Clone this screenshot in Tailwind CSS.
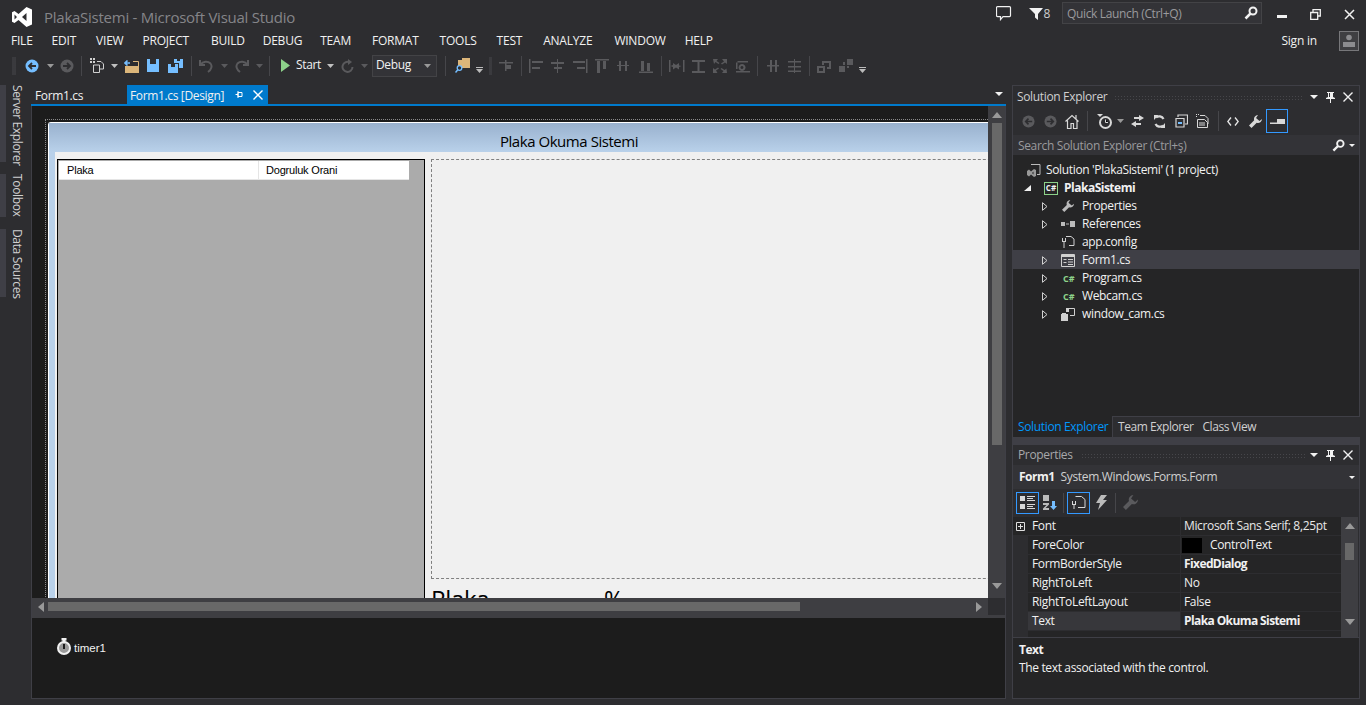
<!DOCTYPE html>
<html lang="en">
<head>
  <meta charset="UTF-8">
  <title>PlakaSistemi - Microsoft Visual Studio</title>
  <script src="https://cdn.jsdelivr.net/npm/@tailwindcss/browser@4"></script>
</head>
<body class="bg-[#2d2d30] text-[#f1f1f1] font-['Open_Sans',sans-serif] text-[12px] tracking-[-0.35px] leading-none overflow-hidden">
<div class="w-[1366px] h-[705px] flex flex-col overflow-hidden">

  <!-- title bar -->
  <div class="h-[32px] flex items-start shrink-0">
    <svg class="ml-[12px] mt-[7px]" width="20" height="20" viewBox="0 0 20 20"><path fill="#fff" fill-rule="evenodd" d="M14.500 0 20 2.500v15L14.500 20 6.500 13 2.500 16 0 14.700V5.300L2.500 4l4 3zM14.500 6 10 10l4.500 4zM2.500 7.500v5L5 10z"/></svg>
    <div class="ml-[12px] mt-[10px] text-[15px] text-[#858589] tracking-[-0.25px]">PlakaSistemi - Microsoft Visual Studio</div>
    <div class="ml-auto flex items-start">
      <svg class="mt-[6px]" width="16" height="15" viewBox="0 0 16 15"><path fill="none" stroke="#f1f1f1" stroke-width="1.200" d="M1.500.6h12a1 1 0 0 1 1 1v8a1 1 0 0 1-1 1H7l-2.500 3v-3h-3a1 1 0 0 1-1-1v-8a1 1 0 0 1 1-1z"/></svg>
      <svg class="ml-[17px] mt-[8px]" width="14" height="12" viewBox="0 0 14 12"><path fill="#f1f1f1" d="M0 0h14L9 6v6L6 9.500V6z"/></svg>
      <div class="mt-[8px] text-[#d0d0d0] text-[12px]">8</div>
      <div class="ml-[12px] mt-[2px] w-[200px] h-[22px] bg-[#333337] border border-[#434346] flex items-center pl-[4px] pr-[3px] pt-[2px] text-[#9a9a9d]">
        <span>Quick Launch (Ctrl+Q)</span>
        <svg class="ml-auto -mt-[2px]" width="14" height="14" viewBox="0 0 14 14"><circle cx="9" cy="5" r="3.500" fill="none" stroke="#f1f1f1" stroke-width="2"/><path stroke="#f1f1f1" stroke-width="2.500" d="M6.500 7.500 1.500 12.500"/></svg>
      </div>
      <div class="ml-[15px] mt-[15px] w-[10px] h-[3px] bg-[#f1f1f1]"></div>
      <svg class="ml-[23px] mt-[9px]" width="11" height="11" viewBox="0 0 11 11"><path fill="none" stroke="#f1f1f1" stroke-width="1.300" d="M3 3V.7h7.300V7H8M.7 3.500h7v6.800h-7z"/></svg>
      <svg class="ml-[23px] mt-[9px] mr-[11px]" width="11" height="11" viewBox="0 0 11 11"><path stroke="#f1f1f1" stroke-width="1.500" d="m1 1 9 9M10 1l-9 9"/></svg>
    </div>
  </div>

  <!-- menu bar -->
  <div class="h-[18px] flex items-center shrink-0 pl-[11px] relative">
    <div class="flex text-[12px] tracking-[-0.22px]">
      <span>FILE</span><span class="ml-[19px]">EDIT</span><span class="ml-[20px]">VIEW</span><span class="ml-[19px]">PROJECT</span><span class="ml-[22px]">BUILD</span><span class="ml-[18px]">DEBUG</span><span class="ml-[18px]">TEAM</span><span class="ml-[21px]">FORMAT</span><span class="ml-[21px]">TOOLS</span><span class="ml-[20px]">TEST</span><span class="ml-[21px]">ANALYZE</span><span class="ml-[22px]">WINDOW</span><span class="ml-[19px]">HELP</span>
    </div>
    <div class="ml-auto flex items-center">
      <span class="text-[12px] tracking-[-0.2px]">Sign in</span>
      <div class="ml-[22px] mr-[7px] w-[20px] h-[20px] border border-[#77777a] bg-[#3f3f42] flex items-center justify-center -mt-[1px]">
        <svg width="14" height="14" viewBox="0 0 14 14"><circle cx="7" cy="3.500" r="2.800" fill="#8c8c8f"/><path fill="#8c8c8f" d="M1 13V8h12v5z"/></svg>
      </div>
    </div>
  </div>

  <!-- toolbar -->
  <div class="h-[27px] mt-[2px] flex items-center shrink-0 pl-[12px] text-[#f1f1f1]">
    <div class="w-[4px] h-[18px] bg-[radial-gradient(#4a4a4e_0.6px,transparent_0.8px)] bg-[length:2px_2px]"></div>
    <svg class="ml-[9px]" width="14" height="14" viewBox="0 0 14 14"><circle cx="7" cy="7" r="6.500" fill="#75beff"/><path fill="none" stroke="#2d2d30" stroke-width="1.800" d="M11 7H4M7 4 4 7l3 3"/></svg>
    <svg class="ml-[8px]" width="7" height="4" viewBox="0 0 7 4"><path fill="#999" d="M0 0h7L3.500 4z"/></svg>
    <svg class="ml-[6px]" width="14" height="14" viewBox="0 0 14 14"><circle cx="7" cy="7" r="6.500" fill="#5a5a5d"/><path fill="none" stroke="#2d2d30" stroke-width="1.800" d="M3 7h7M7 4l3 3-3 3"/></svg>
    <div class="ml-[7px] w-[1px] h-[20px] bg-[#46464a]"></div>
    <svg class="ml-[8px]" width="14" height="15" viewBox="0 0 14 15"><path fill="#d0d0d0" d="M0 0h2v2H0zM3 0h2v2H3zM0 3h2v2H0zM3 3h2v2H3z"/><path fill="none" stroke="#d0d0d0" d="M7 3.500h4l2.500 2.500v5H10M3.500 7h6v7.500h-6z"/></svg>
    <svg class="ml-[7px]" width="7" height="4" viewBox="0 0 7 4"><path fill="#c0c0c0" d="M0 0h7L3.500 4z"/></svg>
    <svg class="ml-[6px]" width="15" height="15" viewBox="0 0 15 15"><path fill="#dcb67a" d="M1 8h14v7H1z"/><path fill="none" stroke="#dcb67a" d="M9 3.500h5.500V8"/><path fill="none" stroke="#75beff" stroke-width="1.600" d="M6 5H1.500M3.500 2.500 1 5l2.500 2.500"/></svg>
    <svg class="ml-[8px]" width="12" height="13" viewBox="0 0 12 13"><path fill="#75beff" fill-rule="evenodd" d="M0 0h12v13H0zM3 0v5h6V0z"/></svg>
    <svg class="ml-[9px]" width="15" height="14" viewBox="0 0 15 14"><path fill="#75beff" fill-rule="evenodd" d="M0 5h10v9H0zM3 5v3h4V5z"/><path fill="#75beff" fill-rule="evenodd" d="M6 0h9v9h-4V4H6zM9 0v2h3V0z"/></svg>
    <div class="ml-[8px] w-[1px] h-[20px] bg-[#46464a]"></div>
    <svg class="ml-[7px]" width="14" height="14" viewBox="0 0 14 14"><path fill="none" stroke="#5a5a5d" stroke-width="2" d="M1 1v5h5M1.500 5.500C4 2 9 2 11.500 4.500c2 2.500 1 6-2.500 8.500"/></svg>
    <svg class="ml-[8px]" width="7" height="4" viewBox="0 0 7 4"><path fill="#5a5a5d" d="M0 0h7L3.500 4z"/></svg>
    <svg class="ml-[7px]" width="14" height="14" viewBox="0 0 14 14"><path fill="none" stroke="#5a5a5d" stroke-width="2" d="M13 1v5H8M12.500 5.500C10 2 5 2 2.500 4.500c-2 2.500-1 6 2.500 8.500"/></svg>
    <svg class="ml-[7px]" width="7" height="4" viewBox="0 0 7 4"><path fill="#5a5a5d" d="M0 0h7L3.500 4z"/></svg>
    <div class="ml-[6px] w-[1px] h-[20px] bg-[#46464a]"></div>
    <svg class="ml-[11px]" width="9" height="13" viewBox="0 0 9 13"><path fill="#8dd28a" d="M0 0 9 6.500 0 13z"/></svg>
    <span class="ml-[6px] mb-[2px]">Start</span>
    <svg class="ml-[6px]" width="7" height="4" viewBox="0 0 7 4"><path fill="#c0c0c0" d="M0 0h7L3.500 4z"/></svg>
    <svg class="ml-[7px]" width="13" height="14" viewBox="0 0 13 14"><path fill="none" stroke="#5a5a5d" stroke-width="2" d="M8.500 3.300A5 5 0 1 0 11.500 8"/><path fill="#5a5a5d" d="M7 0v6l4-3z"/></svg>
    <svg class="ml-[7px]" width="7" height="4" viewBox="0 0 7 4"><path fill="#5a5a5d" d="M0 0h7L3.500 4z"/></svg>
    <div class="ml-[4px] w-[65px] h-[22px] bg-[#333337] border border-[#434346] flex items-center pl-[3px]">
      <span class="mb-[2px]">Debug</span>
      <svg class="ml-auto mr-[5px]" width="7" height="4" viewBox="0 0 7 4"><path fill="#999" d="M0 0h7L3.500 4z"/></svg>
    </div>
    <div class="ml-[8px] w-[1px] h-[20px] bg-[#46464a]"></div>
    <svg class="ml-[9px]" width="15" height="15" viewBox="0 0 15 15"><path fill="#dcb67a" d="M3 2h4V0h8v10H3z"/><circle cx="4.500" cy="10" r="2.300" fill="#2d2d30" stroke="#75beff" stroke-width="1.300"/><path stroke="#75beff" stroke-width="1.500" d="M3 11.500 0.500 14.500"/></svg>
    <svg class="ml-[6px] mt-[9px]" width="7" height="6" viewBox="0 0 7 6"><path fill="#bbb" d="M0 0h7v1H0zM0 2h7L3.500 6z"/></svg>
    <div class="ml-[6px] w-[3px] h-[18px] bg-[radial-gradient(#4a4a4e_0.6px,transparent_0.8px)] bg-[length:2px_2px]"></div>
    <svg class="ml-[7px]" width="14" height="11" viewBox="0 0 14 11"><path fill="#5a5a5d" d="M0 2h14v1.500H0zM6 0h1.500v11H6zM7.500 5H12v4H7.500z"/></svg>
    <div class="ml-[8px] w-[1px] h-[20px] bg-[#46464a]"></div>
    <svg class="ml-[7px]" width="326" height="20" viewBox="0 -2 326 20" fill="#5a5a5d">
      <path d="M0 1h1.500v14H0zM3 3h11v2H3zM3 9h8v2H3z"/>
      <path d="M22 4h13v2H22zM25 9h8v2h-8zM28 1h1v14h-1z"/>
      <path d="M57 1h1.500v14H57zM44 3h12v2H44zM48 9h8v2h-8z"/>
      <path d="M66 1h14v1.500H66zM68 3h3v12h-3zM74 3h3v8h-3z"/>
      <path d="M90 3h2v10h-2zM96 3h2v10h-2zM88 7h12v1H88z"/>
      <path d="M110 15h14v-1.500h-14zM112 3h3v10h-3zM118 5h3v8h-3z"/>
      <path fill="#46464a" d="M132-2h1v20h-1zM228-2h1v20h-1zM280-2h1v20h-1z"/>
      <path d="M140 2h1.500v12H140zM154 2h1.500v12H154zM144 5l3 2 3-2v2.500L152.500 8 150 9v2.500l-3-2-3 2V9l-2.500-1L144 7z"/>
      <path d="M163 2h13v2h-13zM163 13h13v2h-13zM168.500 4h2v9h-2z"/>
      <path d="M184 1h5l-1.500 2 3 2-1 1-3-2L185 6zM198 1v5l-2-1.500-3 2-1-1 3-2L193 1zM184 15v-5l2 1.500 3-2 1 1-3 2 1.500 2.500zM198 15h-5l1.500-2-3-2 1-1 3 2 2-1.500z"/>
      <path fill-rule="evenodd" d="M207 3h12v1.500h-12zM207 3h1.500v8H207zM213 6a3.500 3.500 0 1 0 .1 0zM213 8a1.500 1.500 0 1 1-.1 0zM207 13h14v1.500h-14z"/>
      <path d="M241 2h2v12h-2zM246 2h2v12h-2zM238 7h12v1.500h-12z"/>
      <path d="M259 3h13v1.500h-13zM259 8h13v1.500h-13zM259 12.500h13V14h-13zM265 1h1v14h-1z"/>
      <path fill-rule="evenodd" d="M288 8h8v7h-8zM290 10v3h4v-3zM293 3h9v8h-4V9h2V5h-5v2h-2z"/>
      <path d="M310 8h6v6h-6zM318 1h6v6h-6zM314 4h2v3h-2zM318 8h2v2h-2z"/>
    </svg>
    <svg class="ml-[4px] mt-[9px]" width="7" height="6" viewBox="0 0 7 6"><path fill="#bbb" d="M0 0h7v1H0zM0 2h7L3.500 6z"/></svg>
  </div>

  <!-- main area -->
  <div class="h-[614px] mt-[6px] flex shrink-0">

    <!-- side tabs -->
    <div class="w-[31px] flex flex-col gap-[12px] text-[#d0d0d0] whitespace-nowrap">
      <div class="h-[77px] flex"><div class="w-[6px] bg-[#3f3f46]"></div><div class="ml-[5px] [writing-mode:vertical-rl]">Server Explorer</div></div>
      <div class="h-[43px] flex"><div class="w-[6px] bg-[#3f3f46]"></div><div class="ml-[5px] [writing-mode:vertical-rl]">Toolbox</div></div>
      <div class="h-[68px] flex"><div class="w-[6px] bg-[#3f3f46]"></div><div class="ml-[5px] [writing-mode:vertical-rl]">Data Sources</div></div>
    </div>

    <!-- document well -->
    <div class="w-[975px] flex flex-col shrink-0">
      <div class="h-[19px] flex items-stretch pl-[1px] shrink-0">
        <div class="w-[95px] pl-[3px] pt-[2px] flex items-center">Form1.cs</div>
        <div class="w-[141px] bg-[#007acc] pl-[3px] flex items-center">
          <span class="pt-[2px]">Form1.cs [Design]</span>
          <svg class="ml-[11px]" width="9" height="9" viewBox="0 0 9 9"><path fill="none" stroke="#fff" d="M.5 4.500H3M3 2.500h4v4H3zM3 1v7"/></svg>
          <svg class="ml-[9px]" width="10" height="10" viewBox="0 0 10 10"><path stroke="#fff" stroke-width="1.400" d="m.5.500 9 9M9.500.500l-9 9"/></svg>
        </div>
        <svg class="ml-auto mr-[3px] mt-[7px]" width="8" height="4" viewBox="0 0 8 4"><path fill="#f1f1f1" d="M0 0h8L4 4z"/></svg>
      </div>
      <div class="h-[2px] bg-[#007acc] shrink-0"></div>
      <div class="flex-1 border-l border-b border-r border-[#3f3f46] flex flex-col min-h-0">

        <!-- designer surface -->
        <div class="h-[492px] flex shrink-0 bg-[#1c1c1c]">
          <div class="w-[956px] pl-[13px] pt-[13px] overflow-hidden">
            <div class="h-[492px] pl-[2px] border-l border-t border-dotted border-[#8a8a8a] pt-[2px]">
              <div class="w-[1100px] h-[600px] border-t border-l border-white rounded-tl-[3px] bg-[#b9d1ea]">
                <div class="h-[29px] w-[1040px] bg-gradient-to-b from-[#99b1ce] to-[#b9d1ea] text-black text-[15px] flex items-center justify-center tracking-[-0.45px] pt-[7px]">Plaka Okuma Sistemi</div>
                <div class="ml-[6px] bg-[#f0f0f0] h-[570px] pl-[2px] pt-[7px] flex text-black font-['Liberation_Sans',sans-serif] tracking-normal">
                  <div class="w-[368px] h-[460px] bg-[#ababab] border border-black p-[1px] shrink-0">
                    <div class="w-[350px] h-[19px] bg-white border-b border-[#e5e5e5] flex items-center text-[11px] tracking-[-0.2px]">
                      <div class="w-[200px] pl-[8px] border-r border-[#e5e5e5] h-full flex items-center">Plaka</div>
                      <div class="pl-[7px]">Dogruluk Orani</div>
                    </div>
                  </div>
                  <div class="ml-[6px]">
                    <div class="w-[600px] h-[420px] border border-dashed border-[#808080]"></div>
                    <div class="flex text-[24px] mt-[8px]">
                      <span class="w-[173px] font-['Open_Sans',sans-serif] tracking-[-0.3px]">Plaka</span>
                      <span class="font-['Open_Sans',sans-serif]">%</span>
                    </div>
                  </div>
                </div>
              </div>
            </div>
          </div>
          <div class="w-[17px] bg-[#3e3e42] flex flex-col items-center shrink-0">
            <svg class="mt-[6px]" width="10" height="6" viewBox="0 0 10 6"><path fill="#999" d="M0 6h10L5 0z"/></svg>
            <div class="w-[10px] h-[322px] mt-[5px] bg-[#686868]"></div>
            <svg class="mt-[138px]" width="10" height="6" viewBox="0 0 10 6"><path fill="#999" d="M0 0h10L5 6z"/></svg>
          </div>
        </div>

        <!-- horizontal scrollbar -->
        <div class="h-[20px] bg-[#3e3e42] flex items-start shrink-0">
          <svg class="ml-[6px] mt-[4px]" width="6" height="10" viewBox="0 0 6 10"><path fill="#999" d="M6 0v10L0 5z"/></svg>
          <div class="w-[753px] h-[9px] ml-[4px] mt-[4px] bg-[#686868]"></div>
          <svg class="ml-[176px] mt-[4px]" width="6" height="10" viewBox="0 0 6 10"><path fill="#999" d="M0 0v10l6-5z"/></svg>
          <div class="ml-[6px] w-[17px] h-[17px] bg-[#2d2d30]"></div>
        </div>

        <!-- component tray -->
        <div class="flex-1 bg-[#1c1c1c] flex items-start pl-[25px] pt-[20px]">
          <svg width="14" height="17" viewBox="0 0 14 17"><path fill="#f1f1f1" d="M4.500 0h5v2.500h-1V4h-3V2.500h-1z"/><circle cx="7" cy="10" r="6" fill="#9a9a9a" stroke="#f1f1f1" stroke-width="2"/><path stroke="#1c1c1c" stroke-width="2" d="M7 6v5"/></svg>
          <span class="ml-[3px] mt-[5px] text-[#f1f1f1] font-['Liberation_Sans',sans-serif] text-[11.500px] tracking-normal">timer1</span>
        </div>
      </div>
    </div>

    <!-- tool windows -->
    <div class="ml-[6px] w-[348px] flex flex-col shrink-0">

      <!-- solution explorer -->
      <div class="h-[331px] border border-b-0 border-[#3f3f46] flex flex-col shrink-0">
        <div class="h-[20px] flex items-center pl-[4px] pt-[2px] text-[#d0d0d0] shrink-0">
          <span>Solution Explorer</span>
          <div class="ml-[7px] w-[190px] h-[5px] bg-[radial-gradient(#46464a_1px,transparent_1px)] bg-[length:3px_3px]"></div>
          <svg class="ml-auto" width="8" height="4" viewBox="0 0 8 4"><path fill="#f1f1f1" d="M0 0h8L4 4z"/></svg>
          <svg class="ml-[8px]" width="9" height="11" viewBox="0 0 9 11"><path fill="#f1f1f1" d="M1 0h7v1H7v4l2 1v1H5v4H4V7H0V6l2-1V1H1zM3 1v4h1V1z"/></svg>
          <svg class="ml-[8px] mr-[6px]" width="10" height="10" viewBox="0 0 10 10"><path stroke="#f1f1f1" stroke-width="1.400" d="m.5.500 9 9M9.500.500l-9 9"/></svg>
        </div>
        <div class="h-[28px] flex items-center pl-[9px] pt-[2px] shrink-0">
          <svg width="13" height="13" viewBox="0 0 14 14"><circle cx="7" cy="7" r="6.500" fill="#5a5a5d"/><path fill="none" stroke="#2d2d30" stroke-width="1.800" d="M11 7H4M7 4 4 7l3 3"/></svg>
          <svg class="ml-[9px]" width="13" height="13" viewBox="0 0 14 14"><circle cx="7" cy="7" r="6.500" fill="#5a5a5d"/><path fill="none" stroke="#2d2d30" stroke-width="1.800" d="M3 7h7M7 4l3 3-3 3"/></svg>
          <svg class="ml-[8px]" width="14" height="15" viewBox="0 0 14 15"><path fill="none" stroke="#d8d8d8" stroke-width="1.200" d="M.5 7.500 7 1.500l6.500 6M2.500 6.500v8h3.500v-5h2.500v5H12v-8M11 1v4"/></svg>
          <div class="ml-[8px] w-[1px] h-[20px] bg-[#46464a]"></div>
          <svg class="ml-[9px]" width="15" height="15" viewBox="0 0 15 15"><path fill="#d8d8d8" d="M0 0h6L3 3z"/><circle cx="8.500" cy="8.500" r="5.500" fill="none" stroke="#d8d8d8" stroke-width="2"/><path stroke="#d8d8d8" d="M8.500 5.500v3H11"/></svg>
          <svg class="ml-[5px]" width="7" height="4" viewBox="0 0 7 4"><path fill="#999" d="M0 0h7L3.500 4z"/></svg>
          <svg class="ml-[7px]" width="13" height="12" viewBox="0 0 13 12"><path fill="#d8d8d8" d="M8 0l5 3-5 3V4H3V2h5zM5 6v2h5v2H5v2L0 9z"/></svg>
          <svg class="ml-[9px]" width="13" height="13" viewBox="0 0 13 13"><path fill="none" stroke="#d8d8d8" stroke-width="2.200" d="M10.500 4A4.800 4.800 0 0 0 3 2.500M2.500 9A4.800 4.800 0 0 0 10 10.500"/><path fill="#d8d8d8" d="M1 0h4.500L1 5zM12 13H7.500L12 8z"/></svg>
          <svg class="ml-[9px]" width="13" height="14" viewBox="0 0 13 14"><path fill="none" stroke="#d8d8d8" stroke-width="1.200" d="M3 3V1h9.500v9H10M1 4.500h8V13H1z"/><path fill="#75beff" d="M3 8h4v2H3z"/></svg>
          <svg class="ml-[8px]" width="14" height="14" viewBox="0 0 14 14"><path fill="#d8d8d8" d="M0 0h1v1H0zM2 0h1v1H2zM0 2h1v1H0z"/><path fill="none" stroke="#d8d8d8" d="M4 1.500h5l3 3V10M1.500 5.500h7l3 3v5h-10z"/><path stroke="#d8d8d8" d="M3 9h6M3 11h6"/></svg>
          <div class="ml-[8px] w-[1px] h-[20px] bg-[#46464a]"></div>
          <svg class="ml-[8px]" width="12" height="9" viewBox="0 0 12 9"><path fill="none" stroke="#e8e8e8" stroke-width="1.300" d="M4 .5.800 4.500 4 8.500M8 .5l3.200 4L8 8.500"/></svg>
          <svg class="ml-[10px]" width="13" height="13" viewBox="0 0 13 13"><path fill="#d8d8d8" d="M9 0a4 4 0 0 0-3.800 5.300L0 10.500 2.500 13l5.200-5.200A4 4 0 0 0 13 4L10.500 6 7 3z"/></svg>
          <div class="ml-[4px] w-[22px] h-[24px] border border-[#3399ff] flex items-center justify-center">
            <svg width="15" height="5" viewBox="0 0 15 5"><path fill="#d8d8d8" d="M0 3.500h15V5H0zM7 0h8v3.500H7z"/></svg>
          </div>
        </div>
        <div class="mt-[1px] h-[20px] bg-[#333337] flex items-center pl-[5px] pt-[2px] text-[#9a9a9d] shrink-0">
          <span>Search Solution Explorer (Ctrl+ş)</span>
          <svg class="ml-auto -mt-[2px]" width="13" height="13" viewBox="0 0 14 14"><circle cx="9" cy="5" r="3.500" fill="none" stroke="#f1f1f1" stroke-width="2"/><path stroke="#f1f1f1" stroke-width="2.500" d="M6.500 7.500 1.500 12.500"/></svg>
          <svg class="ml-[4px] mr-[4px] -mt-[2px]" width="6" height="3" viewBox="0 0 6 3"><path fill="#f1f1f1" d="M0 0h6L3 3z"/></svg>
        </div>
        <div class="flex-1 bg-[#252526] pt-[5px] text-[#f1f1f1] flex flex-col min-h-0">
          <div class="h-[18px] flex items-center pl-[13px] pt-[2px]">
            <svg width="15" height="14" viewBox="0 0 15 14"><path fill="none" stroke="#bbb" d="M5 1.500h9v10h-3"/><path fill="#999" fill-rule="evenodd" d="M1 8 3 6.500l2 2 3-2.500 2 1v6l-2 1-3-2.500-2 2-2-1.500zM7.500 8.500 6 10l1.500 1.500z"/></svg>
            <span class="ml-[5px]">Solution 'PlakaSistemi' (1 project)</span>
          </div>
          <div class="h-[18px] flex items-center pl-[11px] pt-[2px]">
            <svg width="7" height="6" viewBox="0 0 7 6"><path fill="#f1f1f1" d="M7 0v6H0z"/></svg>
            <div class="ml-[13px] w-[14px] h-[13px] border border-[#8dd28a] text-[8px] font-bold flex items-center justify-center tracking-normal">C#</div>
            <span class="ml-[6px] font-bold tracking-[-0.5px]">PlakaSistemi</span>
          </div>
          <div class="h-[18px] flex items-center pl-[29px] pt-[2px]">
            <svg width="6" height="9" viewBox="0 0 6 9"><path fill="none" stroke="#d0d0d0" d="M.5.700v7.600L5 4.500z"/></svg>
            <svg class="ml-[14px]" width="12" height="12" viewBox="0 0 13 13"><path fill="#bbb" d="M9 0a4 4 0 0 0-3.800 5.300L0 10.500 2.500 13l5.200-5.200A4 4 0 0 0 13 4L10.500 6 7 3z"/></svg>
            <span class="ml-[8px]">Properties</span>
          </div>
          <div class="h-[18px] flex items-center pl-[29px] pt-[2px]">
            <svg width="6" height="9" viewBox="0 0 6 9"><path fill="none" stroke="#d0d0d0" d="M.5.700v7.600L5 4.500z"/></svg>
            <svg class="ml-[13px]" width="14" height="6" viewBox="0 0 14 6"><path fill="#bbb" d="M0 1h4v4H0zM5 2.500h3v1H5zM9 0h5v6H9z"/></svg>
            <span class="ml-[7px]">References</span>
          </div>
          <div class="h-[18px] flex items-center pl-[48px] pt-[2px]">
            <svg width="14" height="14" viewBox="0 0 14 14"><path fill="none" stroke="#d0d0d0" d="M5 1.500h5l3 2.500v6.500H8"/><path fill="#d0d0d0" d="M1 3h1v3h2V3h1v4H3.500v6h-1V7H1z"/></svg>
            <span class="ml-[7px]">app.config</span>
          </div>
          <div class="h-[19px] bg-[#3f3f46] flex items-center pl-[29px] pt-[1px]">
            <svg width="6" height="9" viewBox="0 0 6 9"><path fill="none" stroke="#d0d0d0" d="M.5.700v7.600L5 4.500z"/></svg>
            <svg class="ml-[13px]" width="14" height="13" viewBox="0 0 14 13"><path fill="none" stroke="#d0d0d0" d="M.5.500h13v12H.5z"/><path fill="#d0d0d0" d="M1 1h12v2H1zM2.500 5h3v1h-3zM2.500 8h3v1h-3zM7 5h5v1H7zM7 7.500h5v1H7zM7 10h5v1H7z"/></svg>
            <span class="ml-[7px]">Form1.cs</span>
          </div>
          <div class="h-[17px] flex items-center pl-[29px] pt-[1px]">
            <svg width="6" height="9" viewBox="0 0 6 9"><path fill="none" stroke="#d0d0d0" d="M.5.700v7.600L5 4.500z"/></svg>
            <span class="ml-[15px] w-[13px] text-[#8dd28a] text-[9px] font-bold tracking-normal">C#</span>
            <span class="ml-[6px]">Program.cs</span>
          </div>
          <div class="h-[18px] flex items-center pl-[29px] pt-[2px]">
            <svg width="6" height="9" viewBox="0 0 6 9"><path fill="none" stroke="#d0d0d0" d="M.5.700v7.600L5 4.500z"/></svg>
            <span class="ml-[15px] w-[13px] text-[#8dd28a] text-[9px] font-bold tracking-normal">C#</span>
            <span class="ml-[6px]">Webcam.cs</span>
          </div>
          <div class="h-[18px] flex items-center pl-[29px] pt-[2px]">
            <svg width="6" height="9" viewBox="0 0 6 9"><path fill="none" stroke="#d0d0d0" d="M.5.700v7.600L5 4.500z"/></svg>
            <svg class="ml-[13px]" width="14" height="14" viewBox="0 0 14 14"><path fill="none" stroke="#d0d0d0" d="M5 1.500h8.500v7H9"/><path fill="#d0d0d0" d="M5 1h3v4H5zM0 7h7v7H0zM1 6h4v1H1z"/></svg>
            <span class="ml-[7px]">window_cam.cs</span>
          </div>
        </div>
      </div>

      <!-- tool window tabs -->
      <div class="h-[21px] flex items-stretch border-l border-[#3f3f46] shrink-0">
        <div class="w-[99px] bg-[#252526] text-[#0097fb] pl-[5px] flex items-center">Solution Explorer</div>
        <div class="flex-1 border-t border-[#3f3f46] border-l flex items-center pl-[5px] text-[#d0d0d0] tracking-[-0.45px]">
          <span>Team Explorer</span><span class="ml-[9px]">Class View</span>
        </div>
      </div>
      <div class="h-[7px] bg-[#3f3f46] shrink-0"></div>

      <!-- properties -->
      <div class="h-[255px] border border-[#3f3f46] flex flex-col shrink-0">
        <div class="h-[20px] flex items-center pl-[5px] text-[#a8a8ab] shrink-0">
          <span>Properties</span>
          <div class="ml-[8px] w-[225px] h-[5px] bg-[radial-gradient(#46464a_1px,transparent_1px)] bg-[length:3px_3px]"></div>
          <svg class="ml-auto" width="8" height="4" viewBox="0 0 8 4"><path fill="#f1f1f1" d="M0 0h8L4 4z"/></svg>
          <svg class="ml-[8px]" width="9" height="11" viewBox="0 0 9 11"><path fill="#f1f1f1" d="M1 0h7v1H7v4l2 1v1H5v4H4V7H0V6l2-1V1H1zM3 1v4h1V1z"/></svg>
          <svg class="ml-[8px] mr-[6px]" width="10" height="10" viewBox="0 0 10 10"><path stroke="#f1f1f1" stroke-width="1.400" d="m.5.500 9 9M9.500.500l-9 9"/></svg>
        </div>
        <div class="h-[24px] bg-[#333337] flex items-center pl-[6px] shrink-0">
          <span class="font-bold tracking-[-0.5px]">Form1</span>
          <span class="ml-[6px] text-[#d0d0d0]">System.Windows.Forms.Form</span>
          <svg class="ml-auto mr-[4px]" width="6" height="3" viewBox="0 0 6 3"><path fill="#f1f1f1" d="M0 0h6L3 3z"/></svg>
        </div>
        <div class="h-[27px] flex items-center pl-[3px] shrink-0">
          <div class="w-[23px] h-[22px] border border-[#3399ff] flex items-center justify-center">
            <svg width="15" height="13" viewBox="0 0 15 13"><path fill="#d8d8d8" d="M0 0h5v5H0zM0 8h5v5H0zM7 0h8v1H7zM7 2h6v1H7zM7 4h8v1H7zM7 8h8v1H7zM7 10h6v1H7zM7 12h8v1H7z"/></svg>
          </div>
          <svg class="ml-[3px]" width="15" height="15" viewBox="0 0 15 15"><path fill="#bbb" d="M1 0h6v6H1zM1 8h6v1.500L3.500 13H7v2H1v-1.500L4.500 10H1z"/><path fill="#75beff" d="M10 6h3v5h2l-3.500 4L8 11h2z"/></svg>
          <div class="ml-[6px] w-[1px] h-[20px] bg-[#46464a]"></div>
          <div class="ml-[3px] w-[23px] h-[22px] border border-[#3399ff] flex items-center justify-center">
            <svg width="15" height="15" viewBox="0 0 15 15"><path fill="none" stroke="#d8d8d8" d="M4.500 1.500h6l3.500 3v8H7"/><path fill="#d8d8d8" d="M1 6h1v3h2V6h1v4H3.500v4h-1v-4H1z"/></svg>
          </div>
          <svg class="ml-[6px]" width="11" height="15" viewBox="0 0 11 15"><path fill="#bbb" d="M5 0h6L7 5h4L2 15l2-7H0z"/></svg>
          <div class="ml-[8px] w-[1px] h-[20px] bg-[#46464a]"></div>
          <svg class="ml-[7px]" width="15" height="15" viewBox="0 0 13 13"><path fill="#5a5a5d" d="M9 0a4 4 0 0 0-3.800 5.300L0 10.500 2.500 13l5.200-5.200A4 4 0 0 0 13 4L10.500 6 7 3z"/></svg>
        </div>
        <div class="h-[120px] flex bg-[#2d2d30] shrink-0 mt-[1px]">
          <div class="w-[328px] flex flex-col gap-[1px] bg-[#2d2d30]">
            <div class="h-[18px] flex bg-[#252526] items-center">
              <div class="w-[15px] flex justify-center"><svg width="9" height="9" viewBox="0 0 9 9"><path fill="none" stroke="#e0e0e0" d="M.5.500h8v8h-8zM4.500 2v5M2 4.500h5"/></svg></div>
              <div class="w-[152px] pl-[4px]">Font</div>
              <div class="flex-1 pl-[3px] border-l border-[#2d2d30] text-[#e8e8e8] h-full flex items-center">Microsoft Sans Serif; 8,25pt</div>
            </div>
            <div class="h-[18px] flex items-center ml-[15px] bg-[#252526]">
              <div class="w-[152px] pl-[4px]">ForeColor</div>
              <div class="flex-1 border-l border-[#2d2d30] flex items-center h-full pl-[1px]"><div class="w-[20px] h-[15px] bg-black"></div><span class="ml-[8px]">ControlText</span></div>
            </div>
            <div class="h-[18px] flex items-center ml-[15px] bg-[#252526]">
              <div class="w-[152px] pl-[4px]">FormBorderStyle</div>
              <div class="flex-1 pl-[3px] border-l border-[#2d2d30] h-full flex items-center font-bold tracking-[-0.6px]">FixedDialog</div>
            </div>
            <div class="h-[18px] flex items-center ml-[15px] bg-[#252526]">
              <div class="w-[152px] pl-[4px]">RightToLeft</div>
              <div class="flex-1 pl-[3px] border-l border-[#2d2d30] h-full flex items-center">No</div>
            </div>
            <div class="h-[18px] flex items-center ml-[15px] bg-[#252526]">
              <div class="w-[152px] pl-[4px]">RightToLeftLayout</div>
              <div class="flex-1 pl-[3px] border-l border-[#2d2d30] h-full flex items-center">False</div>
            </div>
            <div class="h-[18px] flex items-center ml-[15px] bg-[#252526]">
              <div class="w-[152px] pl-[4px] bg-[#37373b] h-full flex items-center">Text</div>
              <div class="flex-1 pl-[3px] border-l border-[#2d2d30] h-full flex items-center font-bold tracking-[-0.6px]">Plaka Okuma Sistemi</div>
            </div>
            <div class="flex-1 ml-[15px] bg-[#252526]"></div>
          </div>
          <div class="w-[17px] bg-[#3e3e42] flex flex-col items-center">
            <svg class="mt-[6px]" width="10" height="6" viewBox="0 0 10 6"><path fill="#999" d="M0 6h10L5 0z"/></svg>
            <div class="w-[9px] h-[17px] mt-[14px] bg-[#686868]"></div>
            <svg class="mt-[59px]" width="10" height="6" viewBox="0 0 10 6"><path fill="#999" d="M0 0h10L5 6z"/></svg>
          </div>
        </div>
        <div class="flex-1 border-t border-[#3f3f46] bg-[#252526] pl-[6px] pt-[6px]">
          <div class="font-bold tracking-[-0.5px]">Text</div>
          <div class="mt-[6px]">The text associated with the control.</div>
        </div>
      </div>
    </div>
  </div>
</div>
</body>
</html>
